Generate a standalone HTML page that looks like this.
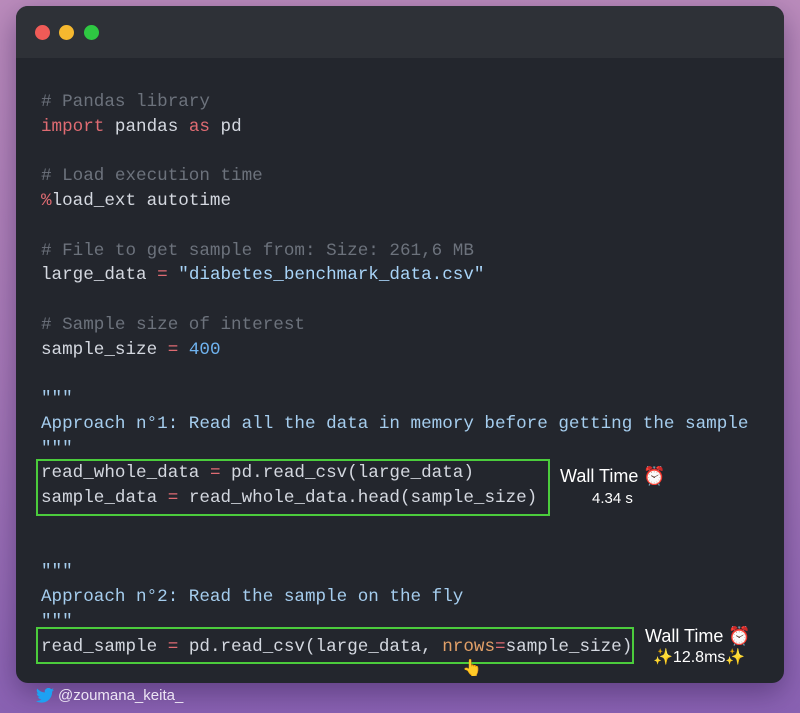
<!DOCTYPE html>
<html><head><meta charset="utf-8"><style>
html,body{margin:0;padding:0}
body{width:800px;height:713px;position:relative;overflow:hidden;background:linear-gradient(180deg,#bb8cbc 0%,#a87ab8 50%,#8a62b3 100%);font-family:"Liberation Sans",sans-serif}
.card{position:absolute;left:16px;top:6px;width:768px;height:677px;border-radius:12px;background:#23262d;overflow:hidden;box-shadow:0 10px 30px rgba(40,20,70,.45)}
.bar{position:absolute;left:0;top:0;width:100%;height:52px;background:#2e3137}
.dot{position:absolute;top:19px;width:15px;height:15px;border-radius:50%}
.code{position:absolute;left:25px;top:84px;font-family:"Liberation Mono",monospace;font-size:17.6px;line-height:24.75px;color:#d4d8e0;white-space:pre}
.c{color:#6c727c}.k{color:#df6b72}.s{color:#a8d4f8}.n{color:#6fb3f0}.d{color:#a5cdee}.o{color:#e2a068}
.box{position:absolute;border:2px solid #4bcc3c}
.wt{position:absolute;color:#fff;font-size:18px;white-space:nowrap}
</style></head><body>
<div class="card">
<div class="bar"></div>
<div class="dot" style="left:19px;background:#ef5b57"></div>
<div class="dot" style="left:43px;background:#f5b82f"></div>
<div class="dot" style="left:68px;background:#2ec842"></div>
<div class="code"><span class="c"># Pandas library</span>
<span class="k">import</span> pandas <span class="k">as</span> pd

<span class="c"># Load execution time</span>
<span class="k">%</span>load_ext autotime

<span class="c"># File to get sample from: Size: 261,6 MB</span>
large_data <span class="k">=</span> <span class="s">"diabetes_benchmark_data.csv"</span>

<span class="c"># Sample size of interest</span>
sample_size <span class="k">=</span> <span class="n">400</span>

<span class="d">"""</span>
<span class="d">Approach n°1: Read all the data in memory before getting the sample</span>
<span class="d">"""</span>
read_whole_data <span class="k">=</span> pd.read_csv(large_data)
sample_data <span class="k">=</span> read_whole_data.head(sample_size)


<span class="d">"""</span>
<span class="d">Approach n°2: Read the sample on the fly</span>
<span class="d">"""</span>
read_sample <span class="k">=</span> pd.read_csv(large_data, <span class="o">nrows</span><span class="k">=</span>sample_size)</div>
<div class="box" style="left:20px;top:453px;width:510px;height:53px"></div>
<div class="box" style="left:20px;top:621px;width:594px;height:33px"></div>
<div class="wt" style="left:544px;top:460px">Wall Time ⏰</div>
<div class="wt" style="left:576px;top:484px;font-size:15px">4.34 s</div>
<div class="wt" style="left:629px;top:620px">Wall Time ⏰</div>
<div class="wt" style="left:637px;top:641px;font-size:16px"><span style="color:#f5c842">✨</span>12.8ms<span style="color:#f5c842">✨</span></div>
<div style="position:absolute;left:446px;top:652px;font-size:16px">👆</div>
</div>
<svg style="position:absolute;left:36px;top:688px" width="18" height="15" viewBox="0 0 24 20"><path fill="#1da1f2" d="M24 2.4a9.8 9.8 0 0 1-2.8.8A4.9 4.9 0 0 0 23.3.4a9.8 9.8 0 0 1-3.1 1.2A4.9 4.9 0 0 0 11.8 6 14 14 0 0 1 1.700.9a4.9 4.9 0 0 0 1.5 6.6 4.9 4.9 0 0 1-2.2-.6 4.9 4.9 0 0 0 3.9 4.9 4.9 4.9 0 0 1-2.2.1 4.9 4.9 0 0 0 4.6 3.4A9.9 9.9 0 0 1 0 17.3 14 14 0 0 0 7.5 19.5c9.1 0 14-7.5 14-14v-.6A10 10 0 0 0 24 2.4z"/></svg>
<div style="position:absolute;left:58px;top:687px;color:#ece4f4;font-size:15px">@zoumana_keita_</div>
</body></html>
